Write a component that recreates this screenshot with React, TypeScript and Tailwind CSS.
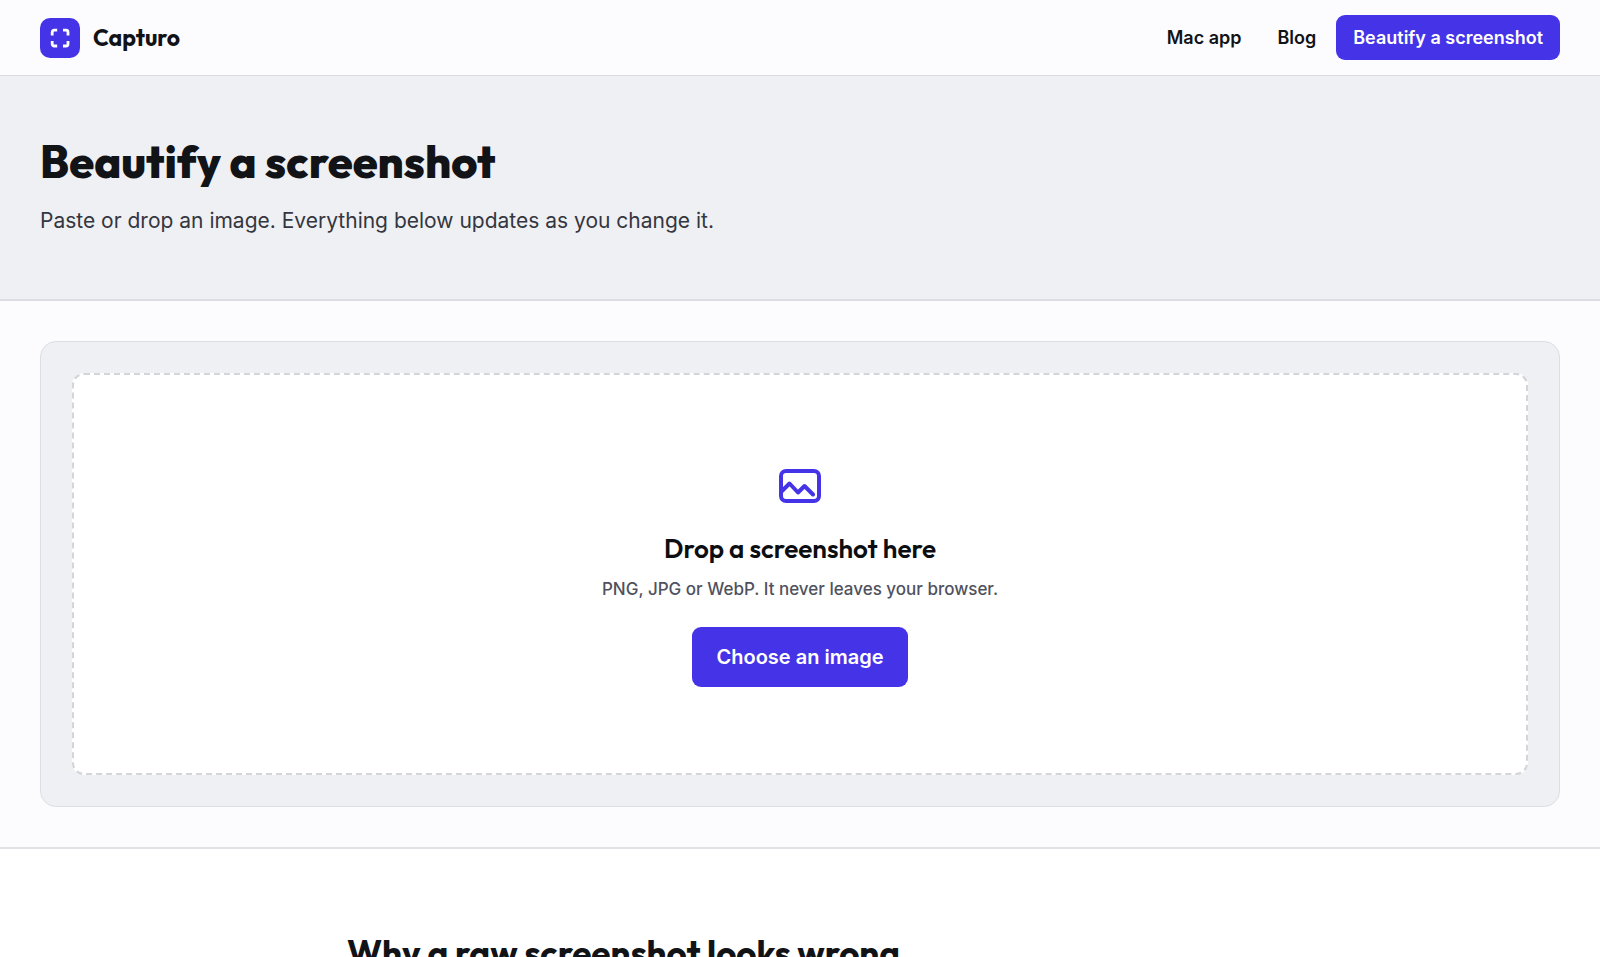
import { useRef } from "react";

function LogoMark() {
  return (
    <span className="flex size-10 items-center justify-center rounded-[10px] bg-[#4533e8]">
      <svg
        className="size-6"
        viewBox="0 0 24 24"
        fill="none"
        stroke="white"
        strokeWidth="2.8"
        strokeLinejoin="round"
        aria-hidden="true"
      >
        <path d="M4.2 9.5V6.2a2 2 0 0 1 2-2h3M15 4.2h3a2 2 0 0 1 2 2v3.3M20 15v3a2 2 0 0 1-2 2h-3M9.2 20h-3a2 2 0 0 1-2-2v-3" />
      </svg>
    </span>
  );
}

function ImageIcon() {
  return (
    <svg
      className="h-[34px] w-[42px]"
      viewBox="0 0 42 34"
      fill="none"
      stroke="#4533e8"
      strokeWidth="4"
      strokeLinecap="round"
      strokeLinejoin="round"
      aria-hidden="true"
    >
      <rect x="2" y="2" width="38" height="30" rx="5" />
      <path d="M2.5 22.5 10.5 14.5l8.5 9 6.5-6.5 8.5 8.5" />
    </svg>
  );
}

export default function App() {
  const fileInput = useRef<HTMLInputElement>(null);

  return (
    <div className="h-screen overflow-hidden bg-white font-['Inter',sans-serif] text-[#111317]">
      <header className="flex items-center justify-between border-b border-[#d9dbe0] bg-[#fcfcfe] px-10 py-[15px]">
        <a href="#" className="flex items-center gap-[13px]">
          <LogoMark />
          <span className="font-['Outfit','Lato',sans-serif] text-[23px] leading-7 font-bold">Capturo</span>
        </a>
        <nav className="flex items-center gap-1 text-[18px] leading-[21px] font-semibold">
          <a href="#mac" className="px-4 py-3">Mac app</a>
          <a href="#blog" className="px-4 py-3">Blog</a>
          <a href="#editor" className="rounded-[9px] bg-[#4533e8] px-[17px] py-3 text-white">
            Beautify a screenshot
          </a>
        </nav>
      </header>

      <main>
        <section className="border-b-2 border-[#dcdee3] bg-[#eff0f4] px-10 py-[60px]">
          <h1 className="font-['Outfit','Lato',sans-serif] text-[45px] leading-[52px] font-extrabold">
            Beautify a screenshot
          </h1>
          <p className="mt-[15px] text-[21px] leading-9 text-[#343640]">
            Paste or drop an image. Everything below updates as you change it.
          </p>
        </section>

        <section id="editor" className="border-b-2 border-[#e0e1e5] bg-[#fcfcfe] p-10">
          <div className="rounded-2xl border border-[#dcdee3] bg-[#eff0f4] p-[31px]">
            <div className="flex flex-col items-center rounded-xl border-2 border-dashed border-[#d3d5da] bg-white pt-[94px] pb-[86px]">
              <ImageIcon />
              <h2 className="mt-7 font-['Outfit','Lato',sans-serif] text-[26px] leading-9 font-semibold text-[#0c0e11]">
                Drop a screenshot here
              </h2>
              <p className="mt-[10px] text-[17px] leading-6 font-medium text-[#4f525e]">
                PNG, JPG or WebP. It never leaves your browser.
              </p>
              <input
                ref={fileInput}
                type="file"
                accept="image/png,image/jpeg,image/webp"
                aria-label="Choose an image"
                className="hidden"
              />
              <button
                type="button"
                onClick={() => fileInput.current?.click()}
                className="mt-[26px] rounded-[9px] bg-[#4533e8] px-6 py-[18px] text-xl leading-6 font-semibold text-white"
              >
                Choose an image
              </button>
            </div>
          </div>
        </section>

        <section className="px-10 pt-20">
          <h2 className="mx-auto max-w-[906px] font-['Outfit','Lato',sans-serif] text-[35px] leading-[48px] font-bold">
            Why a raw screenshot looks wrong
          </h2>
        </section>
      </main>
    </div>
  );
}
